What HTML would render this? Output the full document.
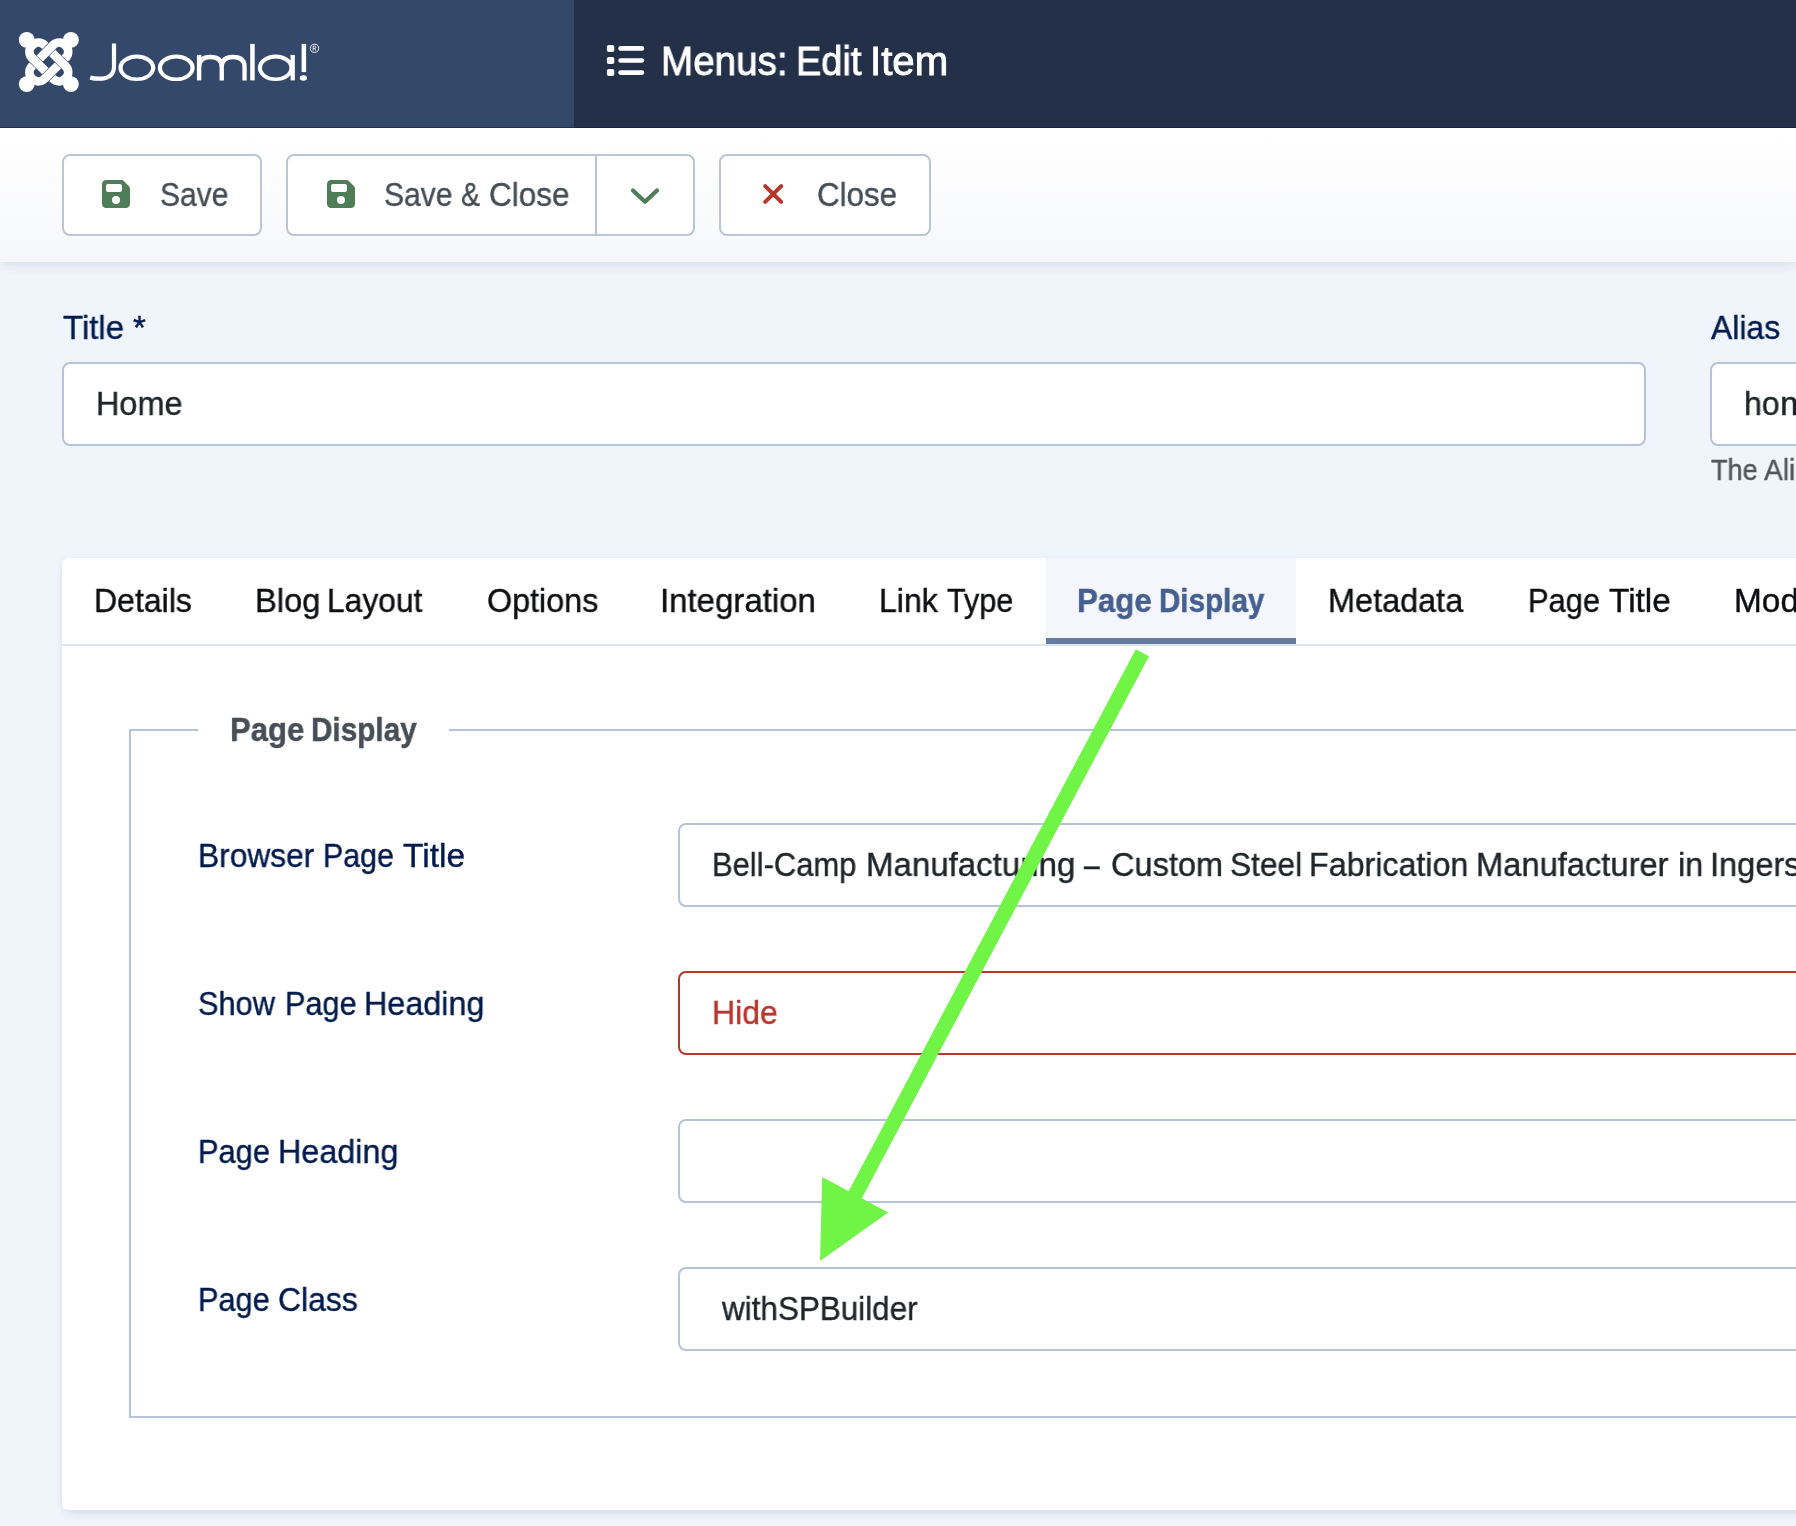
<!DOCTYPE html>
<html lang="en">
<head>
<meta charset="utf-8">
<title>Menus: Edit Item</title>
<style>
*{box-sizing:border-box;margin:0;padding:0}
html,body{width:1796px;height:1526px;overflow:hidden}
body{position:relative;background:#f0f4fb;font-family:"Liberation Sans",sans-serif;}
#root{position:absolute;left:0;top:0;width:1796px;height:1526px;overflow:hidden;background:#f0f4fb}
.abs{position:absolute}
.t{position:absolute;white-space:nowrap;line-height:1;transform-origin:0 0;font-family:"Liberation Sans",sans-serif;-webkit-text-stroke:.4px;will-change:transform}
#hdrL{left:0;top:0;width:574px;height:128px;background:#34486a}
#hdrR{left:574px;top:0;width:1222px;height:128px;background:#242f48}
#hdrLine{left:0;top:127px;width:1796px;height:1px;background:rgba(8,18,50,.45)}
#toolbar{left:0;top:128px;width:1796px;height:134px;background:linear-gradient(#ffffff 0%,#fdfdfe 35%,#f5f7fb 100%);box-shadow:0 3px 10px rgba(40,60,120,.11)}
.btn{position:absolute;top:154px;height:82px;background:#fff;border:2px solid #bcc5d4;border-radius:8px}
.inp{position:absolute;height:84px;background:#fff;border:2px solid #b5c3db;border-radius:8px}
#card{left:62px;top:558px;width:1760px;height:952px;background:#fff;border-radius:6px;box-shadow:0 6px 12px -4px rgba(30,50,120,.11),0 1px 8px rgba(30,50,120,.045)}
#tabline{left:62px;top:644px;width:1734px;height:2px;background:#dde2ef}
#tabact{left:1046px;top:558px;width:250px;height:86px;background:#f4f6fb}
#tabbar{left:1046px;top:638px;width:250px;height:6px;background:#677c9f}
#fs{left:129px;top:729px;width:1700px;height:689px;border:2px solid #b5c3db}
#fsgap{left:198px;top:725px;width:251px;height:10px;background:#fff}
svg{position:absolute;overflow:visible}
</style>
</head>
<body>
<div id="root">
<!-- header -->
<div id="hdrL" class="abs"></div>
<div id="hdrR" class="abs"></div>
<div id="hdrLine" class="abs"></div>

<!-- toolbar -->
<div id="toolbar" class="abs"></div>
<div class="btn" style="left:62px;width:200px"></div>
<div class="btn" style="left:286px;width:409px"></div>
<div class="abs" style="left:595px;top:155px;width:2px;height:80px;background:#bcc5d4"></div>
<div class="btn" style="left:719px;width:212px"></div>

<!-- title / alias -->
<div class="inp" style="left:62px;top:362px;width:1584px"></div>
<div class="inp" style="left:1710px;top:362px;width:200px"></div>

<!-- card -->
<div id="card" class="abs"></div>
<div id="tabact" class="abs"></div>
<div id="tabline" class="abs"></div>
<div id="tabbar" class="abs"></div>
<div id="fs" class="abs"></div>
<div id="fsgap" class="abs"></div>

<!-- field inputs -->
<div class="inp" style="left:678px;top:823px;width:1200px"></div>
<div class="inp" style="left:678px;top:971px;width:1200px;border-color:#b8362c"></div>
<div class="inp" style="left:678px;top:1119px;width:1200px"></div>
<div class="inp" style="left:678px;top:1267px;width:1200px"></div>

<svg style="left:0;top:0" width="120" height="128" viewBox="0 0 120 128"><g transform="translate(48.8,62.0)"><g transform="rotate(0)"><path d="M-9.09,-3.50 L4.31,-16.89 A8.9,8.9 0 0 1 16.89,-4.31 L16.09,-3.50" fill="none" stroke="#fff" stroke-width="8.8" stroke-linecap="butt"/><circle cx="22.1" cy="-22.1" r="7.9" fill="#fff"/></g><g transform="rotate(90)"><path d="M-9.09,-3.50 L4.31,-16.89 A8.9,8.9 0 0 1 16.89,-4.31 L16.09,-3.50" fill="none" stroke="#fff" stroke-width="8.8" stroke-linecap="butt"/><circle cx="22.1" cy="-22.1" r="7.9" fill="#fff"/></g><g transform="rotate(180)"><path d="M-9.09,-3.50 L4.31,-16.89 A8.9,8.9 0 0 1 16.89,-4.31 L16.09,-3.50" fill="none" stroke="#fff" stroke-width="8.8" stroke-linecap="butt"/><circle cx="22.1" cy="-22.1" r="7.9" fill="#fff"/></g><g transform="rotate(270)"><path d="M-9.09,-3.50 L4.31,-16.89 A8.9,8.9 0 0 1 16.89,-4.31 L16.09,-3.50" fill="none" stroke="#fff" stroke-width="8.8" stroke-linecap="butt"/><circle cx="22.1" cy="-22.1" r="7.9" fill="#fff"/></g></g></svg>
<svg style="left:0;top:0" width="340" height="128" viewBox="0 0 340 128"><path d="M114,43.4 V66.5 C114,75.5 107.5,78.7 99.5,78.7 C95.5,78.7 92.8,78.3 90.2,77.6" fill="none" stroke="#fff" stroke-width="4.2"/><path fill="#fff" fill-rule="evenodd" d="M118.39999999999999,67.8 a18.45,13.2 0 1 0 36.9,0 a18.45,13.2 0 1 0 -36.9,0 z M122.64999999999999,68.0 a14.2,9.4 0 1 0 28.4,0 a14.2,9.4 0 1 0 -28.4,0 z"/><path fill="#fff" fill-rule="evenodd" d="M157.8,67.8 a18.45,13.2 0 1 0 36.9,0 a18.45,13.2 0 1 0 -36.9,0 z M162.05,68.0 a14.2,9.4 0 1 0 28.4,0 a14.2,9.4 0 1 0 -28.4,0 z"/><path d="M199.1,80.4 V54.9" fill="none" stroke="#fff" stroke-width="4.4"/><path d="M199.1,67 C199.1,59.5 203.5,57 210.4,57 C217.5,57 221.75,59.8 221.75,67 V80.4" fill="none" stroke="#fff" stroke-width="4.3"/><path d="M221.75,67 C221.75,59.5 226.2,57 233.1,57 C240.2,57 244.55,59.8 244.55,67 V80.4" fill="none" stroke="#fff" stroke-width="4.3"/><path d="M252.45,43.9 V80.4" fill="none" stroke="#fff" stroke-width="4.5"/><path fill="#fff" fill-rule="evenodd" d="M257.8,67.8 a17.9,13.2 0 1 0 35.8,0 a17.9,13.2 0 1 0 -35.8,0 z M262.0,68.0 a13.7,9.4 0 1 0 27.4,0 a13.7,9.4 0 1 0 -27.4,0 z"/><path d="M292.7,54.9 V80.4" fill="none" stroke="#fff" stroke-width="4.3"/><path d="M303.85,43.9 V72.1" fill="none" stroke="#fff" stroke-width="4.5"/><ellipse cx="303.4" cy="78" rx="3.6" ry="2.8" fill="#fff"/><circle cx="314.5" cy="48.3" r="4.1" fill="none" stroke="#fff" stroke-width="0.9"/><path d="M313.2,50.6 V46.1 H314.7 A1.2,1.2 0 0 1 314.7,48.5 H313.2 M314.6,48.5 L316,50.6" fill="none" stroke="#fff" stroke-width="0.85"/></svg>
<svg style="left:0;top:0" width="700" height="128" viewBox="0 0 700 128"><rect x="606.9" y="44.90" width="7.4" height="7" rx="2" fill="#fff"/><path d="M620.6,48.4 H641.9" stroke="#fff" stroke-width="4.7" stroke-linecap="round" fill="none"/><rect x="606.9" y="57.00" width="7.4" height="7" rx="2" fill="#fff"/><path d="M620.6,60.5 H641.9" stroke="#fff" stroke-width="4.7" stroke-linecap="round" fill="none"/><rect x="606.9" y="69.10" width="7.4" height="7" rx="2" fill="#fff"/><path d="M620.6,72.6 H641.9" stroke="#fff" stroke-width="4.7" stroke-linecap="round" fill="none"/></svg>
<svg style="left:102px;top:180px" width="28" height="28" viewBox="0 32 448 448"><path d="M64 32C28.7 32 0 60.7 0 96V416c0 35.3 28.7 64 64 64H384c35.3 0 64-28.7 64-64V173.3c0-17-6.7-33.3-18.7-45.3L352 50.7C340 38.7 323.700 32 306.700 32H64zm0 96c0-17.700 14.300-32 32-32H288c17.700 0 32 14.300 32 32v64c0 17.700-14.300 32-32 32H96c-17.700 0-32-14.300-32-32V128zM224 288a64 64 0 1 1 0 128 64 64 0 1 1 0-128z" fill="#4e7d57" fill-rule="evenodd"/></svg>
<svg style="left:326.5px;top:180px" width="28" height="28" viewBox="0 32 448 448"><path d="M64 32C28.7 32 0 60.7 0 96V416c0 35.3 28.7 64 64 64H384c35.3 0 64-28.7 64-64V173.3c0-17-6.7-33.3-18.7-45.3L352 50.7C340 38.7 323.700 32 306.700 32H64zm0 96c0-17.700 14.300-32 32-32H288c17.700 0 32 14.300 32 32v64c0 17.700-14.300 32-32 32H96c-17.700 0-32-14.300-32-32V128zM224 288a64 64 0 1 1 0 128 64 64 0 1 1 0-128z" fill="#4e7d57" fill-rule="evenodd"/></svg>
<svg style="left:0;top:0" width="700" height="262" viewBox="0 0 700 262"><path d="M633,190.4 L645,201.8 L657,190.4" fill="none" stroke="#4e7d57" stroke-width="4.2" stroke-linecap="round" stroke-linejoin="round"/></svg>
<svg style="left:0;top:0" width="800" height="262" viewBox="0 0 800 262"><path d="M765.2,186.1 L781.2,201.9 M781.2,186.1 L765.2,201.9" fill="none" stroke="#b9362b" stroke-width="4.1" stroke-linecap="round"/></svg>

<span class="t" style="left:661.09px;top:41.51px;font-size:39.8px;color:#ffffff;transform:scaleX(0.9699);-webkit-text-stroke:.9px">Menus:</span>
<span class="t" style="left:795.54px;top:41.51px;font-size:39.8px;color:#ffffff;transform:scaleX(0.9524);-webkit-text-stroke:.9px">Edit</span>
<span class="t" style="left:870.47px;top:41.51px;font-size:39.8px;color:#ffffff;transform:scaleX(1.0104);-webkit-text-stroke:.9px">Item</span>
<span class="t" style="left:160.10px;top:177.73px;font-size:33.4px;color:#474d56;transform:scaleX(0.8989)">Save</span>
<span class="t" style="left:384.00px;top:177.73px;font-size:33.4px;color:#474d56;transform:scaleX(0.9002)">Save</span>
<span class="t" style="left:460.95px;top:177.73px;font-size:33.4px;color:#474d56;transform:scaleX(0.8524)">&amp;</span>
<span class="t" style="left:488.56px;top:177.73px;font-size:33.4px;color:#474d56;transform:scaleX(0.9439)">Close</span>
<span class="t" style="left:817.06px;top:177.53px;font-size:33.4px;color:#474d56;transform:scaleX(0.9380)">Close</span>
<span class="t" style="left:63.00px;top:310.53px;font-size:33.4px;color:#001b4c;transform:scaleX(0.9874)">Title</span>
<span class="t" style="left:132.70px;top:310.53px;font-size:33.4px;color:#001b4c;transform:scaleX(0.9846)">*</span>
<span class="t" style="left:95.66px;top:386.93px;font-size:33.4px;color:#212529;transform:scaleX(0.9711)">Home</span>
<span class="t" style="left:1710.50px;top:310.63px;font-size:33.4px;color:#001b4c;transform:scaleX(0.9557)">Alias</span>
<span class="t" style="left:1743.88px;top:386.73px;font-size:33.4px;color:#212529;transform:scaleX(0.9604)">ho</span>
<span class="t" style="left:1779.92px;top:386.73px;font-size:33.4px;color:#212529;transform:scaleX(1.0417)">m</span>
<span class="t" style="left:1710.50px;top:456.17px;font-size:29.1px;color:#50565c;transform:scaleX(0.9295)">The</span>
<span class="t" style="left:1764.10px;top:456.17px;font-size:29.1px;color:#50565c;transform:scaleX(0.9686)">Ali</span>
<span class="t" style="left:94.08px;top:583.53px;font-size:33.4px;color:#0e0f11;transform:scaleX(0.9591)">Details</span>
<span class="t" style="left:255.14px;top:583.53px;font-size:33.4px;color:#0e0f11;transform:scaleX(0.9785)">Blog</span>
<span class="t" style="left:327.10px;top:583.53px;font-size:33.4px;color:#0e0f11;transform:scaleX(0.9517)">Layout</span>
<span class="t" style="left:487.43px;top:583.53px;font-size:33.4px;color:#0e0f11;transform:scaleX(0.9667)">Options</span>
<span class="t" style="left:660.44px;top:583.53px;font-size:33.4px;color:#0e0f11;transform:scaleX(0.9875)">Integration</span>
<span class="t" style="left:879.28px;top:583.53px;font-size:33.4px;color:#0e0f11;transform:scaleX(0.9604)">Link</span>
<span class="t" style="left:947.40px;top:583.53px;font-size:33.4px;color:#0e0f11;transform:scaleX(0.9162)">Type</span>
<span class="t" style="left:1076.73px;top:583.53px;font-size:33.4px;color:#455f8f;transform:scaleX(0.9374);font-weight:bold;-webkit-text-stroke:.5px">Page</span>
<span class="t" style="left:1158.73px;top:583.53px;font-size:33.4px;color:#455f8f;transform:scaleX(0.8865);font-weight:bold;-webkit-text-stroke:.5px">Display</span>
<span class="t" style="left:1327.66px;top:583.53px;font-size:33.4px;color:#0e0f11;transform:scaleX(0.9713)">Metadata</span>
<span class="t" style="left:1528.15px;top:583.53px;font-size:33.4px;color:#0e0f11;transform:scaleX(0.9229)">Page</span>
<span class="t" style="left:1608.60px;top:583.53px;font-size:33.4px;color:#0e0f11;transform:scaleX(0.9988)">Title</span>
<span class="t" style="left:1733.60px;top:583.53px;font-size:33.4px;color:#0e0f11;transform:scaleX(1.0002)">Mod</span>
<span class="t" style="left:229.54px;top:712.93px;font-size:33.4px;color:#484e57;transform:scaleX(0.9309);font-weight:bold;-webkit-text-stroke:.5px">Page</span>
<span class="t" style="left:310.92px;top:712.93px;font-size:33.4px;color:#484e57;transform:scaleX(0.8899);font-weight:bold;-webkit-text-stroke:.5px">Display</span>
<span class="t" style="left:198.10px;top:838.53px;font-size:33.4px;color:#001b4c;transform:scaleX(0.9498)">Browser</span>
<span class="t" style="left:323.48px;top:838.53px;font-size:33.4px;color:#001b4c;transform:scaleX(0.9083)">Page</span>
<span class="t" style="left:403.20px;top:838.53px;font-size:33.4px;color:#001b4c;transform:scaleX(1.0037)">Title</span>
<span class="t" style="left:198.48px;top:986.53px;font-size:33.4px;color:#001b4c;transform:scaleX(0.9207)">Show</span>
<span class="t" style="left:285.06px;top:986.53px;font-size:33.4px;color:#001b4c;transform:scaleX(0.9176)">Page</span>
<span class="t" style="left:364.46px;top:986.53px;font-size:33.4px;color:#001b4c;transform:scaleX(0.9684)">Heading</span>
<span class="t" style="left:198.16px;top:1134.53px;font-size:33.4px;color:#001b4c;transform:scaleX(0.9216)">Page</span>
<span class="t" style="left:278.26px;top:1134.53px;font-size:33.4px;color:#001b4c;transform:scaleX(0.9684)">Heading</span>
<span class="t" style="left:198.16px;top:1282.73px;font-size:33.4px;color:#001b4c;transform:scaleX(0.9190)">Page</span>
<span class="t" style="left:277.74px;top:1282.73px;font-size:33.4px;color:#001b4c;transform:scaleX(0.9560)">Class</span>
<span class="t" style="left:712.15px;top:847.93px;font-size:33.4px;color:#212529;transform:scaleX(0.9263)">Bell-Camp</span>
<span class="t" style="left:865.82px;top:847.93px;font-size:33.4px;color:#212529;transform:scaleX(0.9893)">Manufacturing</span>
<span class="t" style="left:1084.30px;top:847.93px;font-size:33.4px;color:#212529;transform:scaleX(0.8421)">–</span>
<span class="t" style="left:1111.03px;top:847.93px;font-size:33.4px;color:#212529;transform:scaleX(0.9739)">Custom</span>
<span class="t" style="left:1230.35px;top:847.93px;font-size:33.4px;color:#212529;transform:scaleX(0.9486)">Steel</span>
<span class="t" style="left:1309.37px;top:847.93px;font-size:33.4px;color:#212529;transform:scaleX(0.9653)">Fabrication</span>
<span class="t" style="left:1476.34px;top:847.93px;font-size:33.4px;color:#212529;transform:scaleX(0.9789)">Manufacturer</span>
<span class="t" style="left:1677.56px;top:847.93px;font-size:33.4px;color:#212529;transform:scaleX(0.9680)">in</span>
<span class="t" style="left:1710.17px;top:847.93px;font-size:33.4px;color:#212529;transform:scaleX(0.9752)">Ingers</span>
<span class="t" style="left:712.08px;top:995.93px;font-size:33.4px;color:#b8362c;transform:scaleX(0.9591)">Hide</span>
<span class="t" style="left:722.14px;top:1291.93px;font-size:33.4px;color:#212529;transform:scaleX(0.9409)">withSPBuilder</span>

<svg style="left:0;top:0" width="1796" height="1526" viewBox="0 0 1796 1526"><polygon points="1135.8,649.2 1149.0,656.2 860.4,1201.0 847.2,1193.9" fill="#70f446"/><polygon points="822.2,1177.1 888.2,1212.6 820,1260.9" fill="#70f446"/></svg>
</div>
</body>
</html>
